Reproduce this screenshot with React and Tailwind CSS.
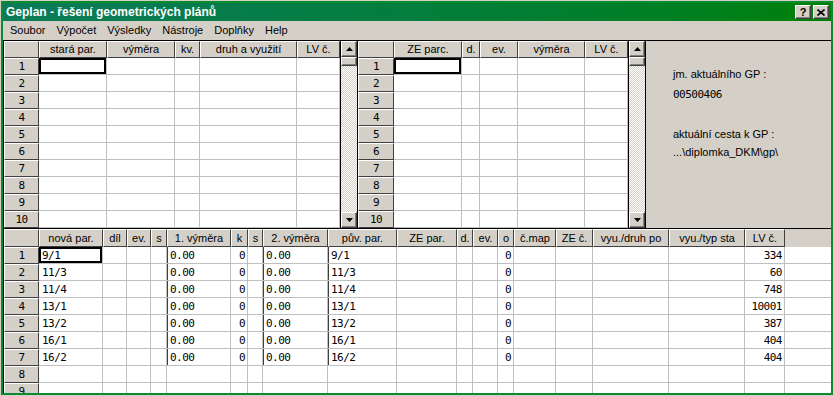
import React from 'react'

// Geplan main window – Win9x look with green title bar

const UI = "font-['Liberation_Sans',Arial,sans-serif]"
const MONO = "font-['DejaVu_Sans_Mono',monospace]"

const bevel = 'bg-[#d4d0c8] border-t border-l border-t-white border-l-white border-r border-b border-r-[#404040] border-b-[#404040]'
const btn = 'bg-[#d4d0c8] border-t border-l border-t-white border-l-white border-r border-b border-r-[#404040] border-b-[#404040] shadow-[inset_-1px_-1px_0_#808080]'

const topLeftCols = [
  { w: 'w-[68px]', label: 'stará par.' },
  { w: 'w-[68px]', label: 'výměra' },
  { w: 'w-[25px]', label: 'kv.' },
  { w: 'w-[97px]', label: 'druh a využití' },
  { w: 'w-[43px]', label: 'LV č.' }
]

const topRightCols = [
  { w: 'w-[68px]', label: 'ZE parc.' },
  { w: 'w-[18px]', label: 'd.' },
  { w: 'w-[38px]', label: 'ev.' },
  { w: 'w-[67px]', label: 'výměra' },
  { w: 'w-[43px]', label: 'LV č.' }
]

const bottomCols = [
  { w: 'w-[64px]', label: 'nová par.' },
  { w: 'w-[24px]', label: 'díl' },
  { w: 'w-[24px]', label: 'ev.' },
  { w: 'w-[16px]', label: 's' },
  { w: 'w-[64px]', label: '1. výměra', mark: true },
  { w: 'w-[17px]', label: 'k', align: 'right' },
  { w: 'w-[15px]', label: 's' },
  { w: 'w-[65px]', label: '2. výměra', mark: true },
  { w: 'w-[69px]', label: 'pův. par.', mark: true },
  { w: 'w-[60px]', label: 'ZE par.' },
  { w: 'w-[16px]', label: 'd.' },
  { w: 'w-[25px]', label: 'ev.' },
  { w: 'w-[16px]', label: 'o', align: 'right' },
  { w: 'w-[42px]', label: 'č.map' },
  { w: 'w-[37px]', label: 'ZE č.' },
  { w: 'w-[76px]', label: 'vyu./druh po' },
  { w: 'w-[76px]', label: 'vyu./typ sta' },
  { w: 'w-[40px]', label: 'LV č.', align: 'right' }
]

const parcels = ['9/1', '11/3', '11/4', '13/1', '13/2', '16/1', '16/2']
const lvNumbers = ['334', '60', '748', '10001', '387', '404', '404']

const bottomData = parcels.map((p, i) => [
  p, '', '', '', '0.00', '0', '', '0.00', p, '', '', '', '0', '', '', '', '', lvNumbers[i]
])

function Arrow({ down }) {
  return (
    <svg width="7" height="4" viewBox="0 0 7 4">
      {down ? <path d="M0 0 H7 L3.5 4 Z" fill="#000" /> : <path d="M3.5 0 L7 4 H0 Z" fill="#000" />}
    </svg>
  )
}

function VScroll() {
  return (
    <div className="w-[18px] shrink-0 border-x border-black flex flex-col">
      <div className={`h-[16px] ${btn} flex items-center justify-center`}>
        <Arrow />
      </div>
      <div className={`h-[9px] ${btn}`} />
      <div className="flex-1 bg-[repeating-conic-gradient(#ffffff_0_25%,#d4d0c8_0_50%)] bg-[length:2px_2px]" />
      <div className={`h-[16px] ${btn} flex items-center justify-center`}>
        <Arrow down />
      </div>
    </div>
  )
}

function Grid({ cols, rowHdr, rows, data = [], filler = false, headerH = 'h-[17px]' }) {
  return (
    <div className="flex flex-col shrink-0">
      <div className={`flex ${headerH}`}>
        <div className={`${rowHdr} shrink-0 ${bevel}`} />
        {cols.map((c, i) => (
          <div key={i} className={`${c.w} shrink-0 ${bevel} flex items-center justify-center whitespace-nowrap overflow-hidden text-[11px] leading-none`}>
            {c.label}
          </div>
        ))}
        {filler && <div className="flex-1 bg-[#d4d0c8]" />}
      </div>
      {Array.from({ length: rows }).map((_, r) => (
        <div key={r} className="flex h-[17px]">
          <div className={`${rowHdr} shrink-0 ${bevel} flex items-center justify-center ${MONO} text-[11px] tracking-[-0.5px] leading-none`}>
            {r + 1}
          </div>
          {cols.map((c, ci) => {
            const v = (data[r] && data[r][ci]) || ''
            let cls = 'bg-white border-r border-b border-[#c0c0c0]'
            if (r === 0 && ci === 0) cls += ' shadow-[inset_0_0_0_2px_#000]'
            else if (c.mark && v) cls += ' shadow-[inset_1px_0_0_#404040]'
            const align = c.align === 'right' ? 'justify-end pr-[2px]' : 'justify-start pl-[3px]'
            return (
              <div key={ci} className={`${c.w} shrink-0 ${cls} flex items-center ${align} ${MONO} text-[11px] tracking-[-0.5px] leading-none overflow-hidden whitespace-nowrap`}>
                {v}
              </div>
            )
          })}
          {filler && <div className="flex-1 bg-white border-b border-[#c0c0c0]" />}
        </div>
      ))}
    </div>
  )
}

export default function App() {
  return (
    <div className={`w-[834px] h-[396px] bg-[#d4d0c8] p-px overflow-hidden text-black ${UI}`}>
      <div className="h-full border-2 border-[#0b8a2e] flex flex-col overflow-hidden">
        {/* title bar */}
        <div className="h-[18px] shrink-0 bg-linear-to-r from-[#0b7b5a] to-[#008000] flex items-center pl-[3px] pr-[2px]">
          <span className="text-white font-bold text-[12px] leading-none">Geplan - řešení geometrických plánů</span>
          <div className="ml-auto flex gap-[2px]">
            <div className={`w-[16px] h-[14px] ${btn} flex items-center justify-center text-[11px] font-bold leading-none`}>?</div>
            <div className={`w-[16px] h-[14px] ${btn} flex items-center justify-center`}>
              <svg width="8" height="7" viewBox="0 0 8 7">
                <path d="M0.5 0.5 L7.5 6.5 M7.5 0.5 L0.5 6.5" stroke="#000" strokeWidth="1.6" />
              </svg>
            </div>
          </div>
        </div>

        {/* menu */}
        <div className="h-[19px] shrink-0 flex items-center pl-[7px] gap-[11px] text-[11px]">
          <span>Soubor</span>
          <span>Výpočet</span>
          <span>Výsledky</span>
          <span>Nástroje</span>
          <span>Doplňky</span>
          <span>Help</span>
        </div>

        {/* top grids */}
        <div className="flex shrink-0 border-t border-black">
          <div className="border-l border-black flex">
            <Grid cols={topLeftCols} rowHdr="w-[35px]" rows={10} />
          </div>
          <VScroll />
          <Grid cols={topRightCols} rowHdr="w-[36px]" rows={10} />
          <VScroll />
          <div className="flex-1 flex flex-col pl-[27px] pt-[26px] text-[11px]">
            <div className="h-[14px] leading-[14px]">jm. aktuálního GP :</div>
            <div className={`h-[14px] leading-[14px] mt-[7px] ${MONO} tracking-[-0.5px]`}>00500406</div>
            <div className="h-[14px] leading-[14px] mt-[25px]">aktuální cesta k GP :</div>
            <div className="h-[14px] leading-[14px] mt-[4px]">...\diplomka_DKM\gp\</div>
          </div>
        </div>

        {/* bottom grid */}
        <div className="flex-1 border-t border-black flex flex-col">
          <div className="border-l border-black flex-1">
            <Grid cols={bottomCols} rowHdr="w-[35px]" rows={9} data={bottomData} filler headerH="h-[18px]" />
          </div>
        </div>
      </div>
    </div>
  )
}
